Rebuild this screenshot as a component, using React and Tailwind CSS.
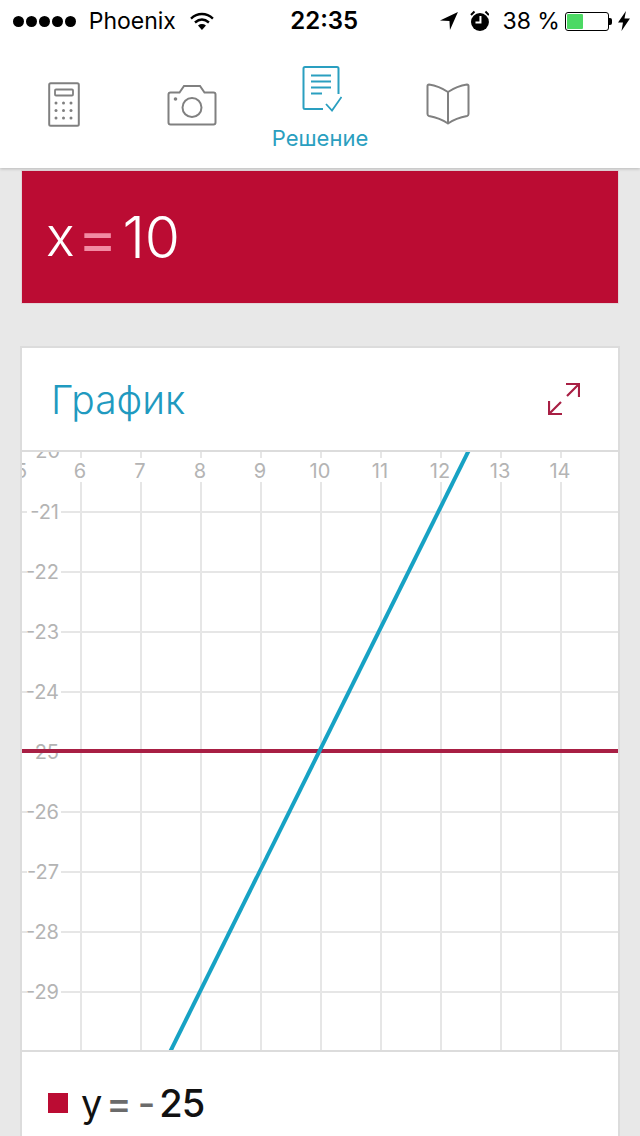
import React from 'react';

const FONT = "font-['Inter','Noto_Sans',sans-serif]";
const xTicks = [6, 7, 8, 9, 10, 11, 12, 13, 14];
const yTicks = [21, 22, 23, 24, 25, 26, 27, 28, 29];

// chart coords: page pixels, so the grid lines up with the screenshot
const px = (v) => 321 + (v - 10) * 60;
const py = (v) => 752 + (v - 25) * 60;

function StatusBar() {
  return (
    <div className="flex items-center h-[42px] pl-[13px] pr-[10px] text-black text-[23px] leading-none">
      <div className="flex items-center gap-[2px] w-[69px]">
        {[0, 1, 2, 3, 4].map((i) => (
          <span key={i} className="w-[11px] h-[11px] rounded-full bg-black" />
        ))}
      </div>
      <span className="ml-[7px] w-[100px]">Phoenix</span>
      <svg width="24" height="18" viewBox="0 0 24 18" className="ml-[2px]">
        <path d="M1 6.5C7.5 0.5 16.5 0.5 23 6.5" fill="none" stroke="#000" strokeWidth="2.4" />
        <path d="M5 10.5C9.5 6.5 14.5 6.5 19 10.5" fill="none" stroke="#000" strokeWidth="2.4" />
        <path d="M8 13.5C10.5 11.5 13.5 11.5 16 13.5L12 18Z" fill="#000" />
      </svg>
      <span className="ml-[76px] w-[149px] text-[24px] font-semibold">22:35</span>
      <svg width="20" height="20" viewBox="0 0 20 20">
        <path d="M19 1L1 9.5L10.5 10L11 19Z" fill="#000" />
      </svg>
      <svg width="20" height="22" viewBox="0 0 20 22" className="ml-[11px]">
        <circle cx="10" cy="12" r="9" fill="#000" />
        <path d="M10.5 6V12.5H5.5" fill="none" stroke="#fff" strokeWidth="2" />
        <path d="M1 5L4.5 1.5M19 5L15.5 1.5" stroke="#000" strokeWidth="2" />
      </svg>
      <span className="ml-[13px] w-[63px] whitespace-nowrap">38 %</span>
      <div className="relative flex items-center w-[44px] h-[19px] border border-black rounded-[3px] p-[1px]">
        <div className="w-[16px] h-full bg-[#4cd964] rounded-[1px]" />
        <span className="absolute -right-[4px] top-[5px] w-[3px] h-[7px] bg-black rounded-r-[2px]" />
      </div>
      <svg width="12" height="20" viewBox="0 0 12 20" className="ml-[9px]">
        <path d="M8 0L0 11.5H5L3.5 20L12 7.5H6.5Z" fill="#000" />
      </svg>
    </div>
  );
}

function CalcIcon() {
  const dots = [];
  [21, 28.5, 36].forEach((cy) => {
    [7.5, 15, 22.5].forEach((cx) => dots.push(<circle key={`${cx}-${cy}`} cx={cx} cy={cy} r="1.5" fill="#808080" />));
  });
  return (
    <svg width="32" height="45" viewBox="0 0 32 45">
      <rect x="1.2" y="1.2" width="29.6" height="42.6" rx="1.5" fill="none" stroke="#808080" strokeWidth="2" />
      <rect x="7" y="7.5" width="18" height="6" rx="1" fill="none" stroke="#808080" strokeWidth="1.8" />
      <g transform="translate(0.5 0)">{dots}</g>
    </svg>
  );
}

function CameraIcon() {
  return (
    <svg width="50" height="42" viewBox="0 0 50 42">
      <path
        d="M3.5 8.5H12.5L17 2H33L37.5 8.5H46.5Q48.5 8.5 48.5 10.5V38.5Q48.5 40.5 46.5 40.5H3.5Q1.5 40.5 1.5 38.5V10.5Q1.5 8.5 3.5 8.5Z"
        fill="none"
        stroke="#808080"
        strokeWidth="2"
      />
      <circle cx="25" cy="23.5" r="9.5" fill="none" stroke="#808080" strokeWidth="2" />
      <circle cx="8.5" cy="15" r="1.8" fill="#808080" />
    </svg>
  );
}

function SolutionIcon() {
  return (
    <svg width="40" height="48" viewBox="0 0 40 48">
      <path d="M21 43H3Q1.5 43 1.5 41.5V2.5Q1.5 1 3 1H35Q36.5 1 36.5 2.5V28" fill="none" stroke="#2a9fc0" strokeWidth="2" />
      <path d="M9 9.5H29M9 15.5H29M9 21.5H29M9 27.5H20" stroke="#2a9fc0" strokeWidth="2" />
      <path d="M24 38L30 44.5L39.5 31" fill="none" stroke="#2a9fc0" strokeWidth="1.8" />
    </svg>
  );
}

function BookIcon() {
  return (
    <svg width="44" height="42" viewBox="0 0 44 42">
      <path
        d="M22 9Q13 3 3 1.5Q1.5 1.5 1.5 3V31Q1.5 32.5 3 33Q14 35 22 40.5Q30 35 41 33Q42.5 32.5 42.5 31V3Q42.5 1.5 41 1.5Q31 3 22 9Z"
        fill="none"
        stroke="#808080"
        strokeWidth="2"
      />
      <path d="M22 9V40" stroke="#808080" strokeWidth="2" />
    </svg>
  );
}

function Tabs() {
  return (
    <div className="grid grid-cols-5 h-[126px]">
      <div className="flex justify-center pt-[40px]"><CalcIcon /></div>
      <div className="flex justify-center pt-[42px]"><CameraIcon /></div>
      <div className="flex flex-col items-center pt-[24px]">
        <div className="ml-[4px]"><SolutionIcon /></div>
        <span className="mt-[11px] text-[22px] leading-[26px] text-[#2a9fc0]">Решение</span>
      </div>
      <div className="flex justify-center pt-[41px]"><BookIcon /></div>
    </div>
  );
}

function Chart() {
  return (
    <svg width="596" height="598" viewBox="22 452 596 598" className="block">
      {xTicks.map((v) => (
        <line key={v} x1={px(v)} x2={px(v)} y1="452" y2="1050" stroke="#e6e6e6" strokeWidth="2" />
      ))}
      {yTicks.map((v) => (
        <line key={v} x1="22" x2="618" y1={py(v)} y2={py(v)} stroke="#e6e6e6" strokeWidth="2" />
      ))}
      {/* axis labels sit on white chips that cut the grid */}
      <rect x="22" y="458" width="596" height="24" fill="#fff" />
      {xTicks.map((v) => (
        <text key={v} x={px(v) - 1} y="478" textAnchor="middle" fontSize="20" fill="#b4b4b4">{v}</text>
      ))}
      <text x="21" y="478" textAnchor="middle" fontSize="20" fill="#b4b4b4">5</text>
      <rect x="28" y="452" width="34" height="8" fill="#fff" />
      <text x="60" y="458" textAnchor="end" fontSize="20" fill="#b4b4b4">-20</text>
      {yTicks.map((v) => (
        <g key={v}>
          <rect x="27" y={py(v) - 12} width="34" height="24" fill="#fff" />
          <text x="59" y={py(v) + 7} textAnchor="end" fontSize="20" fill="#b4b4b4">{`-${v}`}</text>
        </g>
      ))}
      <line x1="22" x2="618" y1="751" y2="751" stroke="#a81f44" strokeWidth="4" />
      <line x1="469" y1="450" x2="170" y2="1052" stroke="#17a2c4" strokeWidth="4" />
    </svg>
  );
}

export default function App() {
  return (
    <div className={`h-[1136px] overflow-hidden bg-[#e8e8e8] ${FONT}`}>
      <header className="relative z-10 h-[168px] bg-white shadow-[0_1px_3px_rgba(0,0,0,0.2)]">
        <StatusBar />
        <Tabs />
      </header>

      <div className="mt-[2px] mx-[21px] h-[134px] bg-[#bb0c33] border border-[#e3d5d8] flex items-center pl-[24px] text-white font-light">
        <span className="text-[54px] leading-none">x</span>
        <span className="ml-[3px] text-[60px] leading-none font-normal text-[#f28ba3]">=</span>
        <span className="ml-[5px] text-[57px] leading-none">10</span>
      </div>

      <section className="mt-[42px] mx-[20px] bg-white border-2 border-[#dcdcdc] border-b-0">
        <div className="h-[104px] flex items-center justify-between pl-[29px] pr-[38px] border-b-2 border-[#dcdcdc]">
          <h2 className="text-[39px] leading-none font-light text-[#1f9ac0]">График</h2>
          <svg width="32" height="32" viewBox="0 0 32 32">
            <path d="M18 1H31V14M31 1L19 13" fill="none" stroke="#a81f44" strokeWidth="2.2" />
            <path d="M14 31H1V18M1 31L13 19" fill="none" stroke="#a81f44" strokeWidth="2.2" />
          </svg>
        </div>
        <Chart />
        <div className="border-t-2 border-[#dcdcdc] flex items-center pl-[26px] pt-[28px] pb-[30px] text-[38px] leading-[46px]">
          <span className="w-[20px] h-[20px] bg-[#bb0c33]" />
          <span className="ml-[13px] text-[#111]">y</span>
          <span className="ml-[4px] font-medium text-[#6b6b6b]">=</span>
          <span className="ml-[6px] font-medium text-[#6b6b6b]">-</span>
          <span className="ml-[4px] font-medium tracking-[-1px] text-[#111]">25</span>
        </div>
      </section>
    </div>
  );
}
